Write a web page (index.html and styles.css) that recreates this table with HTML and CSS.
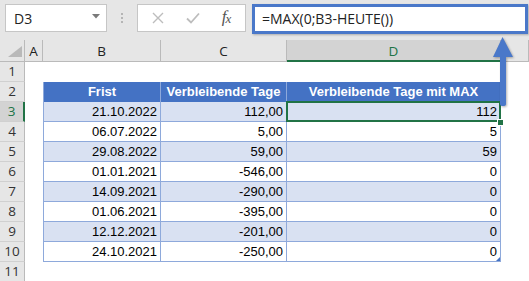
FILE: index.html
```html
<!DOCTYPE html>
<html lang="de">

<head>
    <meta charset="UTF-8">
    <meta name="viewport" content="width=device-width, initial-scale=1.0">
    <title>MAX mit HEUTE</title>
    <link rel="stylesheet" href="styles.css">
</head>

<body>
    <div class="app">
        <div class="formula-bar">
            <div class="name-box">
                <span>D3</span>
                <svg class="caret" width="8" height="5" viewBox="0 0 8 5"><path d="M0 0H8L4 4.5Z" fill="#7a7a7a"/></svg>
            </div>
            <div class="grip">
                <i></i><i></i><i></i>
            </div>
            <div class="fx-buttons">
                <svg width="12" height="12" viewBox="0 0 12 12"><path d="M1 1L11 11M11 1L1 11" stroke="#bdbdbd" stroke-width="1.4"/></svg>
                <svg width="14" height="12" viewBox="0 0 14 12"><path d="M1 6.5L5 10.5L13 1.5" stroke="#bdbdbd" stroke-width="1.8" fill="none"/></svg>
                <span class="fx">f<sub>x</sub></span>
            </div>
            <div class="formula-input">=MAX(0;B3-HEUTE())</div>
        </div>

        <div class="sheet">
            <!-- column headers -->
            <div class="corner"><svg width="14" height="11" viewBox="0 0 14 11"><path d="M14 0V11H0Z" fill="#b9b9b9"/></svg></div>
            <div class="col-head">A</div>
            <div class="col-head">B</div>
            <div class="col-head">C</div>
            <div class="col-head active">D</div>
            <div class="col-head"></div>

            <!-- row 1 -->
            <div class="row-head">1</div>
            <div></div><div></div><div></div><div></div><div></div>

            <!-- row 2: table header -->
            <div class="row-head">2</div>
            <div></div>
            <div class="th first">Frist</div>
            <div class="th">Verbleibende Tage</div>
            <div class="th">Verbleibende Tage mit MAX</div>
            <div></div>

            <div class="row-head active">3</div>
            <div></div>
            <div class="td first band">21.10.2022</div>
            <div class="td band">112,00</div>
            <div class="td band selected">112<span class="fill-handle"></span></div>
            <div></div>

            <div class="row-head">4</div>
            <div></div>
            <div class="td first">06.07.2022</div>
            <div class="td">5,00</div>
            <div class="td">5</div>
            <div></div>

            <div class="row-head">5</div>
            <div></div>
            <div class="td first band">29.08.2022</div>
            <div class="td band">59,00</div>
            <div class="td band">59</div>
            <div></div>

            <div class="row-head">6</div>
            <div></div>
            <div class="td first">01.01.2021</div>
            <div class="td">-546,00</div>
            <div class="td">0</div>
            <div></div>

            <div class="row-head">7</div>
            <div></div>
            <div class="td first band">14.09.2021</div>
            <div class="td band">-290,00</div>
            <div class="td band">0</div>
            <div></div>

            <div class="row-head">8</div>
            <div></div>
            <div class="td first">01.06.2021</div>
            <div class="td">-395,00</div>
            <div class="td">0</div>
            <div></div>

            <div class="row-head">9</div>
            <div></div>
            <div class="td first band">12.12.2021</div>
            <div class="td band">-201,00</div>
            <div class="td band">0</div>
            <div></div>

            <div class="row-head">10</div>
            <div></div>
            <div class="td first">24.10.2021</div>
            <div class="td">-250,00</div>
            <div class="td last">0</div>
            <div></div>

            <div class="row-head">11</div>
            <div></div><div></div><div></div><div></div><div></div>
        </div>

        <!-- arrow pointing at the formula -->
        <svg class="callout-arrow" width="26" height="76" viewBox="0 0 26 76">
            <path d="M12.5 3L23 23H16V70Q16 72 13 72Q10 72 10 70V23H3Z" fill="#4a78c9"/>
        </svg>
    </div>
</body>

</html>
```

FILE: styles.css
```css
* {
    margin: 0;
    padding: 0;
    box-sizing: border-box;
}

body {
    background-color: #fff;
}

.app {
    position: relative;
    width: 529px;
    height: 281px;
    overflow: hidden;
    font-family: "Liberation Sans", Arial, sans-serif;
}

.formula-bar {
    height: 40px;
    background: #e6e6e6;
    display: flex;
    align-items: flex-start;
    padding: 4px 0 0 5px;
}

.name-box {
    width: 102px;
    height: 28px;
    background: #fff;
    border: 1px solid #c6c6c6;
    display: flex;
    align-items: center;
    justify-content: space-between;
    padding: 0 6px 0 8px;
    font-family: "Open Sans", sans-serif;
    font-size: 14px;
    color: #222;
}

.caret {
    margin-top: -3px;
}

.grip {
    width: 30px;
    height: 28px;
    display: flex;
    flex-direction: column;
    align-items: center;
    justify-content: center;
    gap: 2px;
}

.grip i {
    width: 2px;
    height: 2px;
    background: #b5b5b5;
}

.fx-buttons {
    width: 109px;
    height: 28px;
    background: #fff;
    border: 1px solid #c6c6c6;
    display: grid;
    grid-template-columns: 40px 30px 1fr;
    align-items: center;
    justify-items: center;
}

.fx {
    font-family: "Liberation Serif", serif;
    font-style: italic;
    font-size: 17px;
    color: #555;
    margin-top: -3px;
}

.fx sub {
    font-size: 13px;
    vertical-align: -1px;
    margin-left: -1px;
}

.formula-input {
    width: 276px;
    height: 30px;
    margin-left: 6px;
    background: #fff;
    border: 3px solid #4a78c9;
    box-shadow: 1px 1px 2px rgba(0, 0, 0, 0.25);
    font-family: "Open Sans", sans-serif;
    font-size: 14px;
    line-height: 23px;
    padding-left: 7px;
    color: #222;
}

.sheet {
    display: grid;
    grid-template-columns: 25px 18px 118px 126px 214px 1fr;
    grid-template-rows: 22px repeat(11, 20px);
    font-size: 13px;
}

.corner {
    background: #e6e6e6;
    border-right: 1px solid #bababa;
    border-bottom: 1px solid #bababa;
    display: flex;
    align-items: flex-end;
    justify-content: flex-end;
    padding: 0 2px 4px 0;
}

.col-head {
    background: #e6e6e6;
    border-right: 1px solid #bababa;
    border-bottom: 1px solid #bababa;
    text-align: center;
    font-family: "Open Sans", sans-serif;
    font-size: 13.5px;
    line-height: 22px;
    color: #222;
}

.col-head.active {
    background: #d3d3d3;
    color: #217346;
    border-bottom: 2px solid #217346;
}

.row-head {
    background: #e6e6e6;
    border-right: 1px solid #bababa;
    border-bottom: 1px solid #d0d0d0;
    text-align: center;
    font-family: "Open Sans", sans-serif;
    font-size: 13.5px;
    line-height: 19px;
    color: #333;
}

.row-head.active {
    background: #d3d3d3;
    color: #217346;
    border-right: 2px solid #217346;
}

.th {
    background: #4472c4;
    color: #fff;
    font-weight: bold;
    text-align: center;
    line-height: 20px;
    border-right: 1px solid #8ea9db;
}

.td {
    position: relative;
    text-align: right;
    line-height: 19px;
    padding-right: 3px;
    color: #000;
    border-right: 1px solid #8ea9db;
    border-bottom: 1px solid #8ea9db;
}

.first {
    border-left: 1px solid #8ea9db;
}

.band {
    background: #d9e1f2;
}

/* active cell frame and its fill handle */
.selected::after {
    content: "";
    position: absolute;
    inset: -1px -1px -1px -1px;
    border: 2px solid #217346;
}

.fill-handle {
    position: absolute;
    right: -4px;
    bottom: -5px;
    width: 7px;
    height: 7px;
    background: #217346;
    border: 1px solid #fff;
    z-index: 2;
}

/* table resize corner */
.last::after {
    content: "";
    position: absolute;
    right: 0;
    bottom: 0;
    border-left: 4px solid transparent;
    border-bottom: 4px solid #4472c4;
}

.callout-arrow {
    position: absolute;
    left: 490px;
    top: 34px;
    filter: drop-shadow(1px 1px 1px rgba(0, 0, 0, 0.3));
}
```
